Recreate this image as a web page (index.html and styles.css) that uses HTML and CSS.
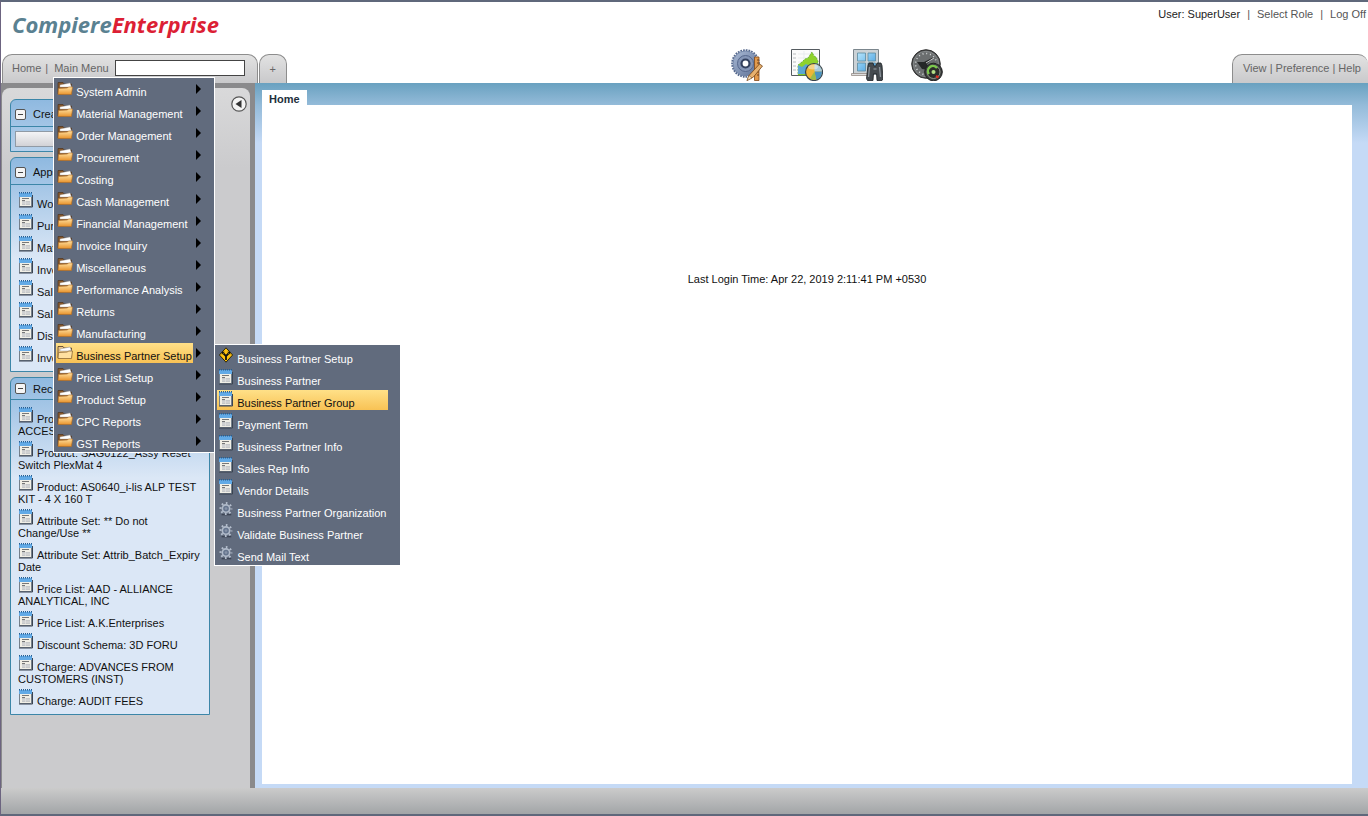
FILE: index.html
```html
<!DOCTYPE html>
<html lang="en">
<head>
<meta charset="utf-8">
<title>Compiere Enterprise</title>
<link rel="stylesheet" href="styles.css">
</head>
<body>
<svg class="defs" aria-hidden="true">
  <defs>
    <linearGradient id="gold" x1="0" y1="0" x2="0" y2="1"><stop offset="0" stop-color="#ffe0a0"/><stop offset="1" stop-color="#e8932c"/></linearGradient>
    <linearGradient id="sky" x1="0" y1="0" x2="1" y2="1"><stop offset="0" stop-color="#b5e4fb"/><stop offset="1" stop-color="#3d9ade"/></linearGradient>
    <linearGradient id="steel" x1="0" y1="0" x2="1" y2="1"><stop offset="0" stop-color="#a9b9d4"/><stop offset="1" stop-color="#5d7196"/></linearGradient>
    <symbol id="folder" viewBox="0 0 16 16">
      <path d="M1 14V2.500h5l1 1.500h7.500v9z" fill="#8a5a2c" stroke="#4f3926" stroke-width=".8"/>
      <path d="M3 5l10-2 1.500 4H3z" fill="#fff" stroke="#aaa" stroke-width=".4"/>
      <path d="M1.500 8.500l9-.5 1-1h4L14.500 14.500H1z" fill="url(#gold)" stroke="#b56f22" stroke-width=".6"/>
    </symbol>
    <symbol id="folder-open" viewBox="0 0 16 16">
      <path d="M1 14V2.500h5l1 1.500h7.500v9z" fill="#f0c987" stroke="#4f3926" stroke-width=".8"/>
      <path d="M3 5l10-2 1.500 4H3z" fill="#fff" stroke="#999" stroke-width=".5"/>
      <path d="M1.500 8.500l9-.5 1-1h4L14.500 14.500H1z" fill="#ffe0a0" stroke="#8f6a35" stroke-width=".8"/>
    </symbol>
    <symbol id="window" viewBox="0 0 14 16">
      <path d="M.5 1.500h12v13H.5z" fill="#f1efe6" stroke="#75808c"/>
      <path d="M0 1h13v4H0z" fill="#62aae6"/>
      <path d="M0 .8h13" stroke="#245f94" stroke-width="1.400" stroke-dasharray="1 1"/>
      <path d="M3 6.500h7M3 8.500h3" stroke="#777"/><path d="M3 9h8v4H3z" fill="#c6c8c9"/><path d="M3 11h8M6.500 9v4" stroke="#e4e4e2" stroke-width=".7"/>
      <path d="M0 15h13.500V3" fill="none" stroke="#3a4350"/>
    </symbol>
    <symbol id="gear" viewBox="0 0 16 16">
      <path d="M3 14.500h11" stroke="#3b4453" stroke-width="1.500"/>
      <circle cx="8" cy="7.500" r="6.200" fill="none" stroke="#b5bfce" stroke-width="2.400" stroke-dasharray="1.900 2.970" stroke-dashoffset=".95"/>
      <circle cx="8" cy="7.500" r="4.200" fill="#66758e" stroke="#b0bac9" stroke-width="1.900"/>
      <circle cx="8" cy="7.500" r="1.500" fill="#8793a8"/>
    </symbol>
    <symbol id="workflow" viewBox="0 0 14 16">
      <path d="M7 .8L13.600 8 7 15.200.4 8z" fill="#ffc20e" stroke="#1c1600" stroke-width=".9"/>
      <path d="M7 13V9L4.500 6.500M7 9l2.500-2.500" fill="none" stroke="#111" stroke-width="1.800"/>
      <path d="M2.800 7.800V4.800h3zM11.200 7.800V4.800h-3z" fill="#111"/>
    </symbol>
  </defs>
</svg>

<header class="header">
  <div class="brand-row">
    <a class="logo" href="#"><span class="logo-a">Compiere</span><span class="logo-b">Enterprise</span></a>
    <div class="session"><span class="user">User: SuperUser</span><span>|</span><a href="#">Select Role</a><span>|</span><a href="#">Log Off</a></div>
  </div>
  <div class="nav-row">
    <div class="tabs">
      <nav class="tab main-tab">
        <a href="#">Home</a><span class="bar">|</span>
        <div class="menu-anchor">
          <a href="#">Main Menu</a>
          <ul class="menu">
            <li><a class="item" href="#"><svg class="ico16"><use href="#folder"/></svg>System Admin</a></li>
            <li><a class="item" href="#"><svg class="ico16"><use href="#folder"/></svg>Material Management</a></li>
            <li><a class="item" href="#"><svg class="ico16"><use href="#folder"/></svg>Order Management</a></li>
            <li><a class="item" href="#"><svg class="ico16"><use href="#folder"/></svg>Procurement</a></li>
            <li><a class="item" href="#"><svg class="ico16"><use href="#folder"/></svg>Costing</a></li>
            <li><a class="item" href="#"><svg class="ico16"><use href="#folder"/></svg>Cash Management</a></li>
            <li><a class="item" href="#"><svg class="ico16"><use href="#folder"/></svg>Financial Management</a></li>
            <li><a class="item" href="#"><svg class="ico16"><use href="#folder"/></svg>Invoice Inquiry</a></li>
            <li><a class="item" href="#"><svg class="ico16"><use href="#folder"/></svg>Miscellaneous</a></li>
            <li><a class="item" href="#"><svg class="ico16"><use href="#folder"/></svg>Performance Analysis</a></li>
            <li><a class="item" href="#"><svg class="ico16"><use href="#folder"/></svg>Returns</a></li>
            <li><a class="item" href="#"><svg class="ico16"><use href="#folder"/></svg>Manufacturing</a></li>
            <li><a class="item active" href="#"><svg class="ico16"><use href="#folder-open"/></svg>Business Partner Setup</a>
              <ul class="menu submenu">
                <li><a class="item" href="#"><svg class="ico14"><use href="#workflow"/></svg>Business Partner Setup</a></li>
                <li><a class="item" href="#"><svg class="ico14"><use href="#window"/></svg>Business Partner</a></li>
                <li><a class="item active" href="#"><svg class="ico14"><use href="#window"/></svg>Business Partner Group</a></li>
                <li><a class="item" href="#"><svg class="ico14"><use href="#window"/></svg>Payment Term</a></li>
                <li><a class="item" href="#"><svg class="ico14"><use href="#window"/></svg>Business Partner Info</a></li>
                <li><a class="item" href="#"><svg class="ico14"><use href="#window"/></svg>Sales Rep Info</a></li>
                <li><a class="item" href="#"><svg class="ico14"><use href="#window"/></svg>Vendor Details</a></li>
                <li><a class="item" href="#"><svg class="ico14"><use href="#gear"/></svg>Business Partner Organization</a></li>
                <li><a class="item" href="#"><svg class="ico14"><use href="#gear"/></svg>Validate Business Partner</a></li>
                <li><a class="item" href="#"><svg class="ico14"><use href="#gear"/></svg>Send Mail Text</a></li>
              </ul>
            </li>
            <li><a class="item" href="#"><svg class="ico16"><use href="#folder"/></svg>Price List Setup</a></li>
            <li><a class="item" href="#"><svg class="ico16"><use href="#folder"/></svg>Product Setup</a></li>
            <li><a class="item" href="#"><svg class="ico16"><use href="#folder"/></svg>CPC Reports</a></li>
            <li><a class="item" href="#"><svg class="ico16"><use href="#folder"/></svg>GST Reports</a></li>
          </ul>
        </div>
        <input class="search" type="text" aria-label="Search menu">
      </nav>
      <button class="tab add-tab" type="button" aria-label="Add tab">+</button>
    </div>
    <div class="tools">
      <button type="button" aria-label="Setup"><svg viewBox="0 0 32 32">
        <circle cx="14.500" cy="14.500" r="13.300" fill="none" stroke="#54678c" stroke-width="2" stroke-dasharray="1.700 1.020"/>
        <circle cx="14.500" cy="14.500" r="12.500" fill="url(#steel)" stroke="#6a7da2" stroke-width=".8"/>
        <circle cx="14.500" cy="14.500" r="8" fill="#8495b6" stroke="#56688d"/>
        <circle cx="14.500" cy="14.500" r="4" fill="#fff" stroke="#33415f" stroke-width="2.200"/>
        <path d="M23.500 8h4.500v23.500h-4.500z" fill="#e39a4c" stroke="#81491a" stroke-width=".8"/><path d="M26 11h2M26 14h2M26 20h2M26 23h2M26 26h2" stroke="#70401a"/>
        <path d="M16 31.500l2-5L28.500 15l3 2-9 11z" fill="#e7b16f" stroke="#774619" stroke-width=".8"/><path d="M16 31.500l2-5 3 2.500z" fill="#f8e3c0" stroke="#774619" stroke-width=".5"/>
      </svg></button>
      <button type="button" aria-label="Reports"><svg viewBox="0 0 32 32">
        <path d="M.5 .5h28v26H.5z" fill="#fbfbfb" stroke="#555b60"/>
        <path d="M2 5h3M2 9h3M2 13h3M2 17h3M2 21h3" stroke="#b7bbbd"/><path d="M7 5h20M7 9h20M7 13h20M13 2v23M20 2v23" stroke="#e3e7e9" stroke-width=".7"/>
        <path d="M7 16l4-3 3-3 3-1 2-3 2-3 2 4 2 1 2 4v14H7z" fill="#8fd22c" stroke="#5ea92c" stroke-width=".8" stroke-dasharray="2 1"/>
        <path d="M7 25v-9l4 2 4-3 4 2 8-3v11z" fill="#5ba6d2"/>
        <circle cx="23" cy="23" r="8.500" fill="#efb637" stroke="#37424c" stroke-width="1.200"/>
        <path d="M23.500 22.500v-7.500a8 8 0 0 1 7.500 7.500z" fill="#a9cbdc"/><path d="M23.500 22.500h7.500a8 8 0 0 1-6 8z" fill="#4a93c4"/><path d="M23.500 22.500l1.500 8a8 8 0 0 1-6-1z" fill="#9dbb4a"/><ellipse cx="22" cy="18" rx="5" ry="2.500" fill="#fff" opacity=".4"/>
      </svg></button>
      <button type="button" aria-label="Window search"><svg viewBox="0 0 32 32">
        <path d="M2.500 .5h25v25h-25z" fill="#cbd2d6" stroke="#7b868d"/><path d="M.5 24.500h20v2H.5z" fill="#ddd" stroke="#8b8078" stroke-width=".7"/>
        <path d="M6.500 4h8v8h-8zM17 4h7.500v8H17zM6.500 14h8v8h-8zM17 14h7.500v8H17z" fill="url(#sky)" stroke="#5d8aa0" stroke-width=".8"/>
        <path d="M17 16.500l1-2.500h4l1 3h2l1-3h4l1 2.500 1 13-1 2h-5l-.5-7h-3L22 31.500h-5.500l-1-2z" fill="#454b50" stroke="#1d2124" stroke-width=".8"/>
        <path d="M18.500 18l-1 10M28.500 18l1 10" stroke="#8c949b" stroke-width="1.300"/><path d="M22.500 20h3" stroke="#9da4aa"/>
      </svg></button>
      <button type="button" aria-label="Dashboard"><svg viewBox="0 0 32 32">
        <circle cx="15" cy="15" r="14.300" fill="#4c4e4f" stroke="#333"/><circle cx="15" cy="15" r="12.700" fill="#6b6e6f" stroke="#8e9293" stroke-width=".8"/>
        <circle cx="15" cy="15" r="10.500" fill="none" stroke="#d5d9da" stroke-width="1.600" stroke-dasharray="1 2.800"/>
        <path d="M6 13l7 0 10-5-7 7 3 6-8-1z" fill="#252727"/><path d="M15 14l8-5" stroke="#c9cccd"/>
        <circle cx="22.500" cy="23" r="8.800" fill="#3c3e3e" stroke="#202020"/><circle cx="22.500" cy="23" r="6.500" fill="#2b2d2a" stroke="#a7b09e" stroke-width=".8"/>
        <path d="M18 25a5 5 0 0 1 8-6" fill="none" stroke="#7cc94c" stroke-width="2.300"/><path d="M25 27l2.500 1.500" stroke="#e12f22" stroke-width="2.500"/><circle cx="22.500" cy="23" r="2" fill="#b5df87"/>
      </svg></button>
    </div>
    <nav class="tab view-tab"><a href="#">View</a> | <a href="#">Preference</a> | <a href="#">Help</a></nav>
  </div>
</header>

<div class="main">
  <div class="side-wrap">
    <aside class="side">
      <div class="panels">
        <section class="panel">
          <h2><button class="toggle" type="button" aria-label="Collapse"></button>Create</h2>
          <div class="create"><button class="new" type="button" aria-label="New record"></button></div>
        </section>
        <section class="panel">
          <h2><button class="toggle" type="button" aria-label="Collapse"></button>Apps</h2>
          <ul class="links">
            <li><a href="#"><svg class="ico14"><use href="#window"/></svg>Work</a></li>
            <li><a href="#"><svg class="ico14"><use href="#window"/></svg>Purge</a></li>
            <li><a href="#"><svg class="ico14"><use href="#window"/></svg>Match</a></li>
            <li><a href="#"><svg class="ico14"><use href="#window"/></svg>Invoice</a></li>
            <li><a href="#"><svg class="ico14"><use href="#window"/></svg>Sales</a></li>
            <li><a href="#"><svg class="ico14"><use href="#window"/></svg>Sales</a></li>
            <li><a href="#"><svg class="ico14"><use href="#window"/></svg>Display</a></li>
            <li><a href="#"><svg class="ico14"><use href="#window"/></svg>Invoice</a></li>
          </ul>
        </section>
        <section class="panel compact">
          <h2><button class="toggle" type="button" aria-label="Collapse"></button>Recent</h2>
          <ul class="links">
            <li><a href="#"><svg class="ico14"><use href="#window"/></svg>Product<br>ACCESS</a></li>
            <li><a href="#"><svg class="ico14"><use href="#window"/></svg>Product: SAG0122_Assy Reset Switch PlexMat 4</a></li>
            <li><a href="#"><svg class="ico14"><use href="#window"/></svg>Product: AS0640_i-lis ALP TEST KIT - 4 X 160 T</a></li>
            <li><a href="#"><svg class="ico14"><use href="#window"/></svg>Attribute Set: ** Do not Change/Use **</a></li>
            <li><a href="#"><svg class="ico14"><use href="#window"/></svg>Attribute Set: Attrib_Batch_Expiry Date</a></li>
            <li><a href="#"><svg class="ico14"><use href="#window"/></svg>Price List: AAD - ALLIANCE ANALYTICAL, INC</a></li>
            <li><a href="#"><svg class="ico14"><use href="#window"/></svg>Price List: A.K.Enterprises</a></li>
            <li><a href="#"><svg class="ico14"><use href="#window"/></svg>Discount Schema: 3D FORU</a></li>
            <li><a href="#"><svg class="ico14"><use href="#window"/></svg>Charge: ADVANCES FROM CUSTOMERS (INST)</a></li>
            <li><a href="#"><svg class="ico14"><use href="#window"/></svg>Charge: AUDIT FEES</a></li>
          </ul>
        </section>
      </div>
      <button class="collapse" type="button" aria-label="Hide sidebar"><svg viewBox="0 0 16 16"><circle cx="8" cy="8" r="7.200" fill="#f4f4f4" stroke="#555" stroke-width="1.200"/><path d="M10.500 4v8L4.500 8z" fill="#333"/></svg></button>
    </aside>
  </div>
  <main class="content">
    <div class="page-tab">Home</div>
    <div class="page"><p>Last Login Time: Apr 22, 2019 2:11:41 PM +0530</p></div>
  </main>
</div>
<footer class="footer"></footer>
</body>
</html>
```
FILE: styles.css
```css
* { box-sizing: border-box; }

body {
  margin: 0;
  min-height: 100vh;
  display: flex;
  flex-direction: column;
  border-top: 2px solid #5f687b;
  border-left: 1px solid #6c6480;
  border-bottom: 2px solid #5f687b;
  background: #fff;
  font: 11px/12px "Liberation Sans", Arial, sans-serif;
  color: #111;
  overflow-x: hidden;
}

a { color: inherit; text-decoration: none; }
ul { list-style: none; margin: 0; padding: 0; }
button { font: inherit; color: inherit; padding: 0; border: 0; background: none; }
.defs { position: absolute; width: 0; height: 0; }

.header { padding-left: 1px; }

.brand-row {
  display: flex;
  justify-content: space-between;
  height: 46px;
  padding: 6px 2px 0 10px;
}

.logo { font: italic bold 22px/32px "Open Sans", sans-serif; }
.logo-a { color: #5a8191; }
.logo-b { color: #dc1f35; }

.session { display: flex; gap: 7px; color: #555; }
.session .user { color: #222; }

.nav-row {
  display: grid;
  grid-template-columns: auto 20fr auto 13fr auto;
  align-items: end;
  height: 35px;
}

.tabs { grid-column: 1; display: flex; gap: 1px; }

.tab {
  height: 29px;
  border: 1px solid #8d8d8d;
  border-bottom: 0;
  border-radius: 10px 10px 0 0;
  background: linear-gradient(#e2e2e2, #c9c9cb);
  color: #666;
}

.main-tab { display: flex; align-items: center; padding: 0 12px 2px 9px; }
.bar { margin: 0 6px 0 4px; }
.menu-anchor { position: relative; }

.search {
  width: 130px;
  height: 16px;
  margin-left: 6px;
  padding: 0 2px;
  border: 1px solid #444;
  background: #fff;
  font: inherit;
}

.add-tab { width: 28px; padding-bottom: 1px; }

.tools { grid-column: 3; display: flex; gap: 28px; padding-bottom: 2px; }
.tools button, .tools svg { display: block; width: 32px; height: 32px; }

.view-tab { grid-column: 5; padding: 7px 7px 0 10px; border-right: 0; }

.menu {
  position: absolute;
  z-index: 2;
  top: 15px;
  left: -1px;
  width: 162px;
  padding: 1px 21px 1px 2px;
  border: 1px solid #fff;
  background: #616b7d;
  color: #fff;
}

.menu li { position: relative; }
.menu li + li { margin-top: 2px; }

.menu > li::after {
  content: "";
  position: absolute;
  top: 5px;
  right: -8px;
  border: 5px solid transparent;
  border-left-color: #000;
  border-right: 0;
}

.submenu { top: 1px; left: 158px; width: 187px; padding: 1px 12px 1px 2px; }
.submenu > li::after { content: none; }

.item { display: block; height: 20px; padding: 1px 0 0 1px; white-space: nowrap; }
.item.active { background: linear-gradient(#ffe088, #f8c255); color: #111; }

.ico16 { width: 16px; height: 16px; margin-right: 3px; }
.ico14 { width: 14px; height: 16px; margin-right: 4px; }
.submenu .item { padding-left: 2px; }

.main { flex: 1; display: flex; }

.side-wrap {
  flex: 0 0 254px;
  padding: 5px 5px 0 1px;
  background: #8a8a8c;
}

.side {
  display: flex;
  justify-content: space-between;
  align-items: flex-start;
  height: 100%;
  padding: 8px 3px 24px 8px;
  border-radius: 8px 8px 0 0;
  background: linear-gradient(#d9d9da, #cbcbcd 80px);
}

.panels { width: 200px; display: flex; flex-direction: column; gap: 5px; padding-top: 3px; }

.panel {
  border: 1px solid #3c86a8;
  border-radius: 6px 0 0 0;
  background: linear-gradient(#8fb9e0, #dbe7f6 100px);
}

.panel h2 {
  display: flex;
  align-items: center;
  gap: 7px;
  height: 27px;
  margin: 0;
  padding: 2px 4px 0;
  border-bottom: 1px solid #3c86a8;
  font-size: 11px;
  font-weight: normal;
}

.compact h2 { height: 22px; padding-top: 0; }

.toggle {
  width: 11px;
  height: 11px;
  border: 1px solid #555;
  border-radius: 2px;
  background: linear-gradient(#444, #444) center / 5px 1px no-repeat #f5f5f5;
}

.create { padding: 4px; }
.new {
  display: block;
  width: 160px;
  height: 16px;
  border: 1px solid #909aa5;
  background: linear-gradient(#f4f4f6, #d2d2d6);
}

.links { padding: 7px 7px 3px; }
.links li { padding-bottom: 4px; }
.links a { display: block; }
.links .ico14 { margin: 0 4px 0 1px; }

.collapse { width: 16px; height: 16px; }
.collapse svg { display: block; width: 16px; height: 16px; }

.content {
  flex: 1;
  display: flex;
  flex-direction: column;
  align-items: flex-start;
  padding: 7px 16px 4px 7px;
  background: linear-gradient(#69a1c0, #94bbd9 22px, #c5daf6 60px);
}

.page-tab {
  height: 15px;
  padding: 3px 7px 0;
  background: #fff;
  font-weight: bold;
  color: #222f3c;
}

.page {
  flex: 1;
  align-self: stretch;
  padding-top: 168px;
  background: #fff;
  text-align: center;
}

.page p { margin: 0; }

.footer { height: 26px; background: linear-gradient(#cbcbcb, #a2a5a7); }
```
